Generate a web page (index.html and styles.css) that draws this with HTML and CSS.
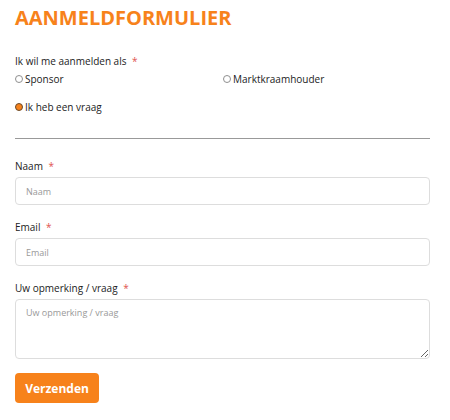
FILE: index.html
```html
<!DOCTYPE html>
<html lang="nl">
<head>
  <meta charset="UTF-8">
  <title>Aanmeldformulier</title>
  <link rel="stylesheet" href="styles.css">
</head>
<body>

  <!-- Aanmeldformulier -->
  <div class="form-wrap">
    <h2>AANMELDFORMULIER</h2>
    <form id="signupForm">
      <div class="field">
        <label class="field-label">Ik wil me aanmelden als <span class="req">*</span></label>
        <div class="radio-grid">
          <label class="radio"><span class="dot"></span>Sponsor</label>
          <label class="radio"><span class="dot"></span>Marktkraamhouder</label>
          <label class="radio"><span class="dot checked"></span>Ik heb een vraag</label>
        </div>
      </div>

      <hr class="divider">

      <div class="field">
        <label class="field-label" for="naam">Naam <span class="req">*</span></label>
        <input type="text" id="naam" placeholder="Naam">
      </div>

      <div class="field">
        <label class="field-label" for="email">Email <span class="req">*</span></label>
        <input type="email" id="email" placeholder="Email">
      </div>

      <div class="field last">
        <label class="field-label" for="vraag">Uw opmerking / vraag <span class="req">*</span></label>
        <textarea id="vraag" placeholder="Uw opmerking / vraag"></textarea>
      </div>

      <button type="button">Verzenden</button>
    </form>
  </div>

</body>
</html>
```

FILE: styles.css
```css
* {
  box-sizing: border-box;
}

body {
  margin: 0;
  padding: 4px 20px 0 15px;
  background: #fff;
  font-family: 'Open Sans', 'Noto Sans', sans-serif;
  color: #222;
  font-size: 10px;
}

h2 {
  margin: 0 0 23px;
  font-size: 20px;
  font-weight: 700;
  color: #f7821b;
}

.field {
  margin-bottom: 15px;
}

.field.last {
  margin-bottom: 14px;
}

.field-label {
  display: block;
  font-size: 10px;
  margin-bottom: 4px;
}

.radio-grid {
  display: grid;
  grid-template-columns: 208px 1fr;
  row-gap: 14px;
  margin-top: 1px;
}

.req {
  color: #e0534f;
  margin-left: 3px;
}

.radio {
  display: flex;
  align-items: center;
  font-size: 10px;
}

.dot {
  width: 8px;
  height: 8px;
  border: 1px solid #8f8f8f;
  border-radius: 50%;
  margin-right: 2px;
}

.dot.checked {
  border: 1px solid #6a4a2a;
  background: #f7821b;
}

.divider {
  border: none;
  border-top: 1px solid #999;
  margin: 24px 0 20px;
}

input,
textarea {
  display: block;
  width: 100%;
  padding: 6px 10px;
  border: 1px solid #ddd;
  border-radius: 4px;
  font-family: inherit;
  font-size: 9px;
  color: #333;
}

input {
  height: 28px;
}

textarea {
  height: 60px;
  resize: vertical;
}

input::placeholder,
textarea::placeholder {
  color: #999;
}

button {
  background: #f7821b;
  color: #fff;
  border: none;
  border-radius: 4px;
  width: 84px;
  height: 30px;
  font-family: inherit;
  font-size: 12px;
  font-weight: 700;
  cursor: pointer;
}
```
